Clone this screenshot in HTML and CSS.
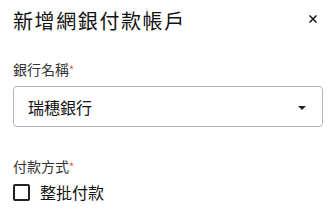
FILE: index.html
```html
<html>
  <head>
    <link rel="stylesheet" href="styles.css">
  </head>
  <body>
    <div class="dialog">
      <div class="header">
        <div class="title">新增網銀付款帳戶</div>
        <div class="close">
          <svg width="8" height="8" viewBox="0 0 8 8">
            <path d="M0.5 0.5 L7.5 7.5 M7.5 0.5 L0.5 7.5" stroke="#111" stroke-width="1.5"/>
          </svg>
        </div>
      </div>

      <div class="field">
        <div class="label">銀行名稱<span class="req">*</span></div>
        <div class="select">
          <span>瑞穗銀行</span>
          <div class="arrow"></div>
        </div>
      </div>

      <div class="field second">
        <div class="label">付款方式<span class="req">*</span></div>
        <div class="check">
          <div class="box"></div>
          <span>整批付款</span>
        </div>
      </div>
    </div>
  </body>
</html>
```

FILE: styles.css
```css
body {
  margin: 0;
  background: #fff;
  font-family: "Noto Sans CJK TC", "Noto Sans", sans-serif;
  color: #1a1a1a;
}

.dialog {
  padding: 7px 0 0 13px;
  width: 310px;
}

.header {
  display: flex;
  justify-content: space-between;
  align-items: center;
  height: 28px;
}

.title {
  font-size: 20px;
  line-height: 28px;
  letter-spacing: 1.6px;
  color: #111;
}

.close {
  display: flex;
  margin-right: 6px;
  margin-top: -4px;
}

.field {
  margin-top: 24px;
}

.field.second {
  margin-top: 29px;
}

.label {
  font-size: 14px;
  line-height: 20px;
  color: #333;
}

.req {
  color: #f4511e;
  font-size: 11px;
  vertical-align: top;
}

.select {
  box-sizing: border-box;
  margin-top: 7px;
  height: 41px;
  border: 1px solid #b5b5b5;
  border-radius: 4px;
  display: flex;
  align-items: center;
  justify-content: space-between;
  padding: 0 16px 0 14px;
  font-size: 16px;
  color: #111;
}

.arrow {
  width: 0;
  height: 0;
  border-left: 4px solid transparent;
  border-right: 4px solid transparent;
  border-top: 4px solid #222;
  margin-top: 2px;
}

.check {
  margin-top: 4px;
  display: flex;
  align-items: center;
  font-size: 16px;
  color: #111;
}

.box {
  width: 13px;
  height: 13px;
  border: 2px solid #222;
  border-radius: 2px;
  margin-right: 10px;
}
```
